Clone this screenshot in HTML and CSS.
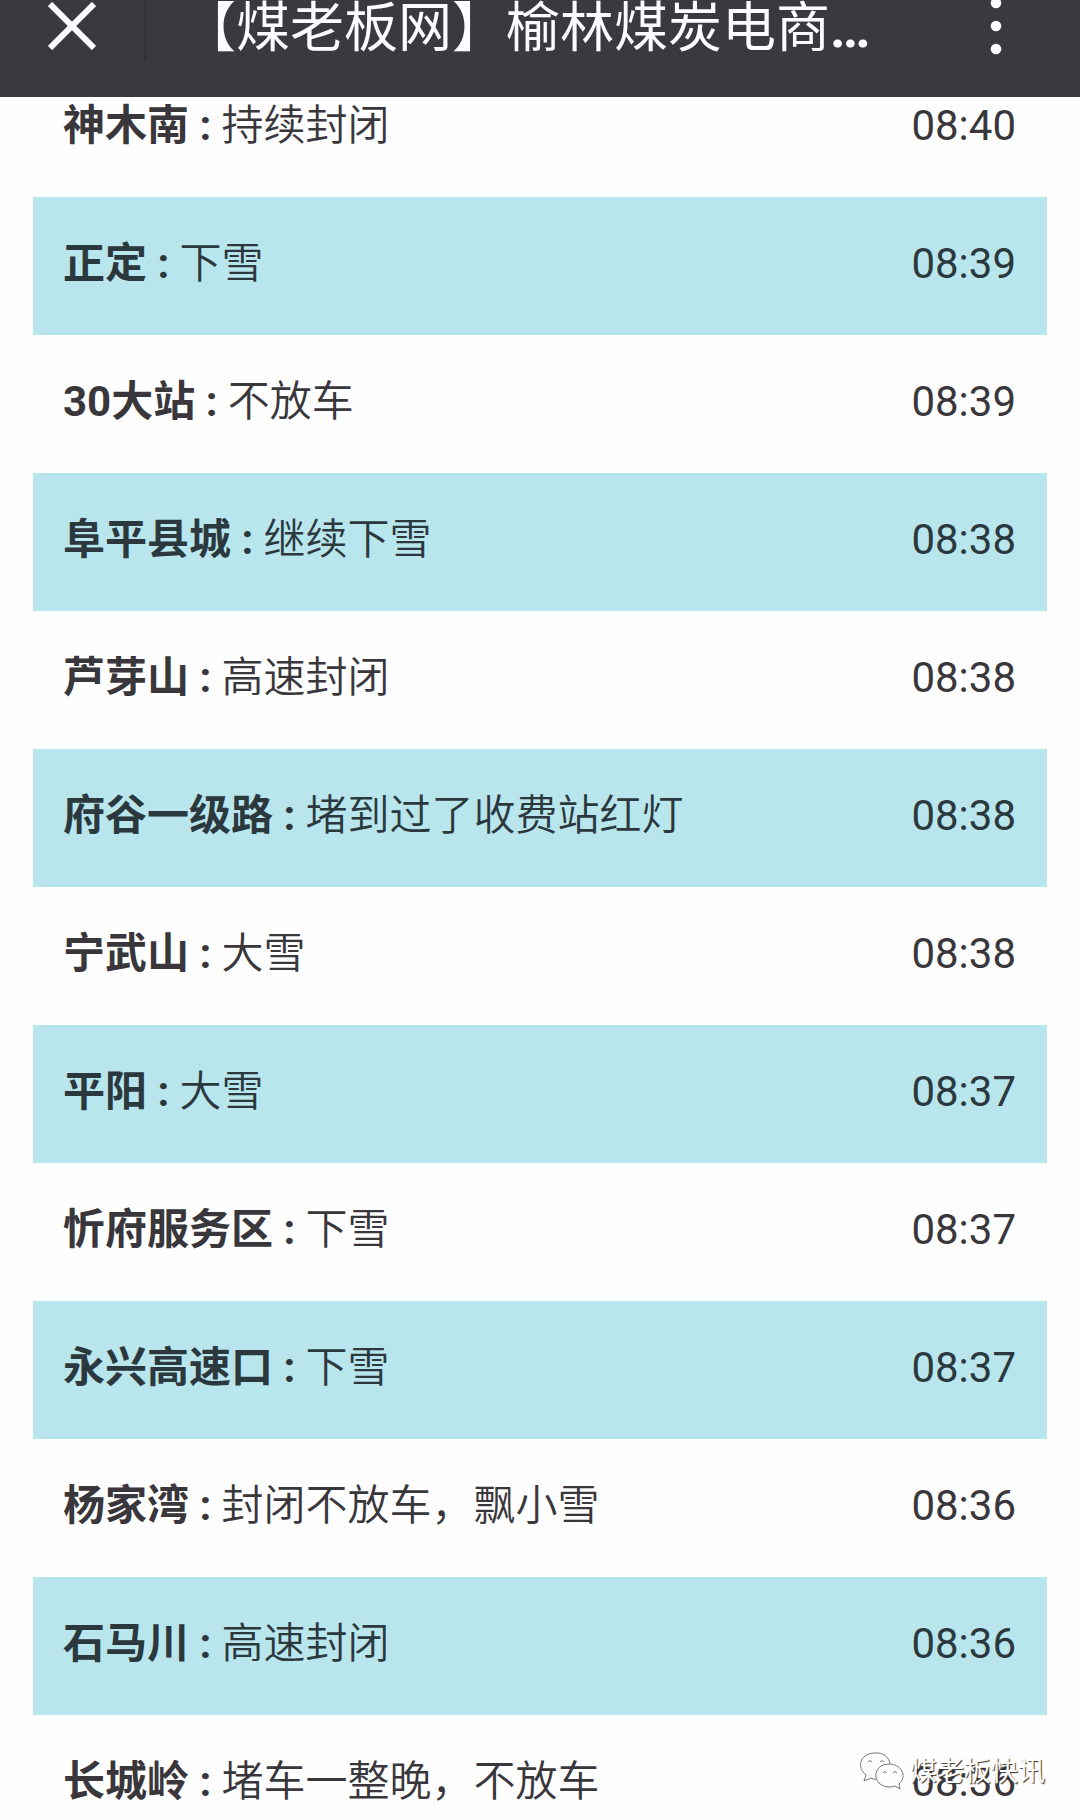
FILE: index.html
```html
<!DOCTYPE html>
<html lang="zh-CN">
<head>
    <meta charset="UTF-8">
    <meta name="viewport" content="width=device-width, initial-scale=1.0">
    <title>【煤老板网】榆林煤炭电商</title>
    <link rel="stylesheet" href="styles.css">
</head>
<body>

    <header class="topbar">
        <svg class="close-icon" viewBox="0 0 48 48">
            <path d="M2 2L46 46M46 2L2 46" />
        </svg>
        <span class="divider"></span>
        <h1>【煤老板网】榆林煤炭电商<span class="dots">...</span></h1>
        <svg class="menu-icon" viewBox="0 0 12 58">
            <circle cx="6" cy="5" r="5.3" />
            <circle cx="6" cy="28" r="5.3" />
            <circle cx="6" cy="51" r="5.3" />
        </svg>
    </header>

    <ul class="road-list">
        <li><p><strong>神木南 :</strong> 持续封闭</p><time>08:40</time></li>
        <li><p><strong>正定 :</strong> 下雪</p><time>08:39</time></li>
        <li><p><strong>30大站 :</strong> 不放车</p><time>08:39</time></li>
        <li><p><strong>阜平县城 :</strong> 继续下雪</p><time>08:38</time></li>
        <li><p><strong>芦芽山 :</strong> 高速封闭</p><time>08:38</time></li>
        <li><p><strong>府谷一级路 :</strong> 堵到过了收费站红灯</p><time>08:38</time></li>
        <li><p><strong>宁武山 :</strong> 大雪</p><time>08:38</time></li>
        <li><p><strong>平阳 :</strong> 大雪</p><time>08:37</time></li>
        <li><p><strong>忻府服务区 :</strong> 下雪</p><time>08:37</time></li>
        <li><p><strong>永兴高速口 :</strong> 下雪</p><time>08:37</time></li>
        <li><p><strong>杨家湾 :</strong> 封闭不放车，飘小雪</p><time>08:36</time></li>
        <li><p><strong>石马川 :</strong> 高速封闭</p><time>08:36</time></li>
        <li><p><strong>长城岭 :</strong> 堵车一整晚，不放车</p><time>08:36</time></li>
    </ul>

    <!-- account watermark over the last row -->
    <div class="watermark">
        <svg viewBox="0 0 46 40">
            <path d="M17 27.5Q14 27 12 26L5 29L7 23C-2 16 0 2 15 1C24 0 30 5 31 12" />
            <path d="M30 12C13 12 12 34 30 35Q33 35 36 34L41 37L40 32C49 24 42 12 30 12Z" />
            <path d="M9 10Q11 7 13 10M21 10Q23 7 25 10M24 21Q26 18 28 21M34 21Q36 18 38 21" />
        </svg>
        <span>煤老板快讯</span>
    </div>

</body>
</html>
```
FILE: styles.css
```css
* {
    box-sizing: border-box;
}
body {
    position: relative;
    height: 1820px;
    margin: 0;
    overflow: hidden;
    background-color: #fefefe;
    color: #39373b;
    font-family: Roboto, "Noto Sans CJK SC", sans-serif;
}
.topbar {
    position: absolute;
    top: 0;
    left: 0;
    z-index: 1;
    display: flex;
    align-items: flex-start;
    width: 100%;
    height: 97px;
    padding-left: 48px;
    background-color: #393a3e;
    color: #fbfcff;
}
.close-icon {
    width: 48px;
    height: 48px;
    margin-top: 2px;
    fill: none;
    stroke: #fbfcff;
    stroke-width: 6;
}
.divider {
    width: 2px;
    height: 60px;
    margin-left: 48px;
    background-color: #323337;
}
h1 {
    width: 700px;
    margin: 2px 0 0 36px;
    font-size: 54px;
    font-weight: 400;
    line-height: 54px;
    white-space: nowrap;
}
.dots {
    font-weight: 700;
    letter-spacing: -3px;
}
.menu-icon {
    width: 12px;
    height: 58px;
    margin-top: -2px;
    margin-left: 108px;
    fill: #fbfcff;
}
.road-list {
    margin: 0;
    padding: 59px 33px 0;
    list-style-type: none;
}
.road-list li {
    display: flex;
    align-items: center;
    justify-content: space-between;
    height: 138px;
    padding: 0 31px 4px 30px;
    font-size: 42px;
    line-height: 60px;
    white-space: nowrap;
}
.road-list li:nth-child(even) {
    background-color: #b9e5ed;
    color: #2b393e;
}
.road-list p {
    margin: 0;
    font-weight: 350;
}
.road-list strong {
    font-weight: 700;
}
.watermark {
    position: absolute;
    top: 1752px;
    left: 859px;
    display: flex;
    align-items: center;
    gap: 5px;
    height: 40px;
}
.watermark svg {
    width: 46px;
    height: 40px;
    fill: #fefefe;
    stroke: #77777a;
    stroke-width: 1;
}
.watermark span {
    color: #ffffff;
    font-size: 27px;
    line-height: 40px;
    text-shadow: 1px 1px 1px #333333;
}
```
